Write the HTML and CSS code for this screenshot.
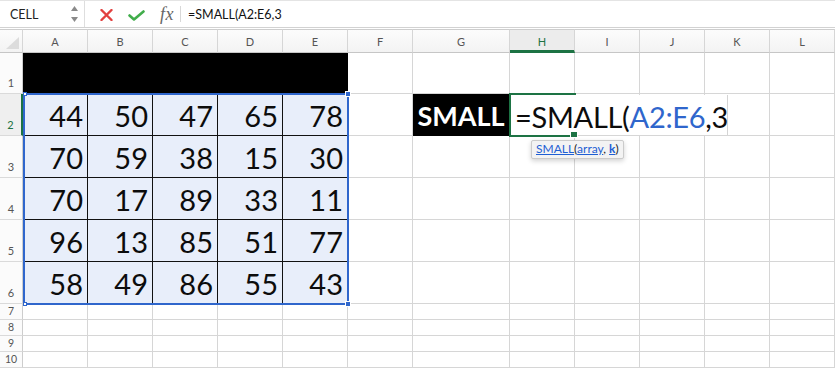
FILE: index.html
```html
<!DOCTYPE html>
<html>
  <head>
    <meta charset="utf-8" />
    <title>SMALL function</title>
    <link rel="stylesheet" href="styles.css">
  </head>
  <body>
    <div class="formula-bar">
      <div class="name-box">
        <span class="name-text">CELL</span>
        <svg class="spinner" width="9" height="18" viewBox="0 0 9 18">
          <path d="M4.5 1 L8 6 L1 6 Z" fill="#8a8a8a" />
          <path d="M4.5 17 L8 12 L1 12 Z" fill="#8a8a8a" />
        </svg>
      </div>
      <svg class="icon-cancel" width="13" height="12" viewBox="0 0 13 12">
        <path d="M1.5 1 L11.5 11 M11.5 1 L1.5 11" stroke="#e2403f" stroke-width="2.4" stroke-linecap="round" />
      </svg>
      <svg class="icon-ok" width="17" height="11" viewBox="0 0 17 11">
        <path d="M1.5 5.5 L6 9.5 L15.5 1.5" stroke="#41ad4b" stroke-width="2.6" fill="none" stroke-linecap="round" stroke-linejoin="round" />
      </svg>
      <span class="fx">fx</span>
      <span class="fb-sep"></span>
      <span class="fb-text">=SMALL(A2:E6,3</span>
    </div>

    <div class="sheet-wrap">
      <div class="sheet">
        <!-- header row -->
        <div class="corner"><span class="corner-tri"></span></div>
        <div class="col-head">A</div>
        <div class="col-head">B</div>
        <div class="col-head">C</div>
        <div class="col-head">D</div>
        <div class="col-head">E</div>
        <div class="col-head">F</div>
        <div class="col-head">G</div>
        <div class="col-head active">H</div>
        <div class="col-head">I</div>
        <div class="col-head">J</div>
        <div class="col-head">K</div>
        <div class="col-head">L</div>

        <!-- row 1 -->
        <div class="row-head">1</div>
        <div class="cell black"></div>
        <div class="cell black"></div>
        <div class="cell black"></div>
        <div class="cell black"></div>
        <div class="cell black"></div>
        <div class="cell"></div>
        <div class="cell"></div>
        <div class="cell"></div>
        <div class="cell"></div>
        <div class="cell"></div>
        <div class="cell"></div>
        <div class="cell"></div>

        <!-- row 2 -->
        <div class="row-head active">2</div>
        <div class="cell num">44</div>
        <div class="cell num">50</div>
        <div class="cell num">47</div>
        <div class="cell num">65</div>
        <div class="cell num">78</div>
        <div class="cell"></div>
        <div class="cell label">SMALL</div>
        <div class="cell"></div>
        <div class="cell"></div>
        <div class="cell"></div>
        <div class="cell"></div>
        <div class="cell"></div>

        <!-- row 3 -->
        <div class="row-head">3</div>
        <div class="cell num">70</div>
        <div class="cell num">59</div>
        <div class="cell num">38</div>
        <div class="cell num">15</div>
        <div class="cell num">30</div>
        <div class="cell"></div>
        <div class="cell"></div>
        <div class="cell"></div>
        <div class="cell"></div>
        <div class="cell"></div>
        <div class="cell"></div>
        <div class="cell"></div>

        <!-- row 4 -->
        <div class="row-head">4</div>
        <div class="cell num">70</div>
        <div class="cell num">17</div>
        <div class="cell num">89</div>
        <div class="cell num">33</div>
        <div class="cell num">11</div>
        <div class="cell"></div>
        <div class="cell"></div>
        <div class="cell"></div>
        <div class="cell"></div>
        <div class="cell"></div>
        <div class="cell"></div>
        <div class="cell"></div>

        <!-- row 5 -->
        <div class="row-head">5</div>
        <div class="cell num">96</div>
        <div class="cell num">13</div>
        <div class="cell num">85</div>
        <div class="cell num">51</div>
        <div class="cell num">77</div>
        <div class="cell"></div>
        <div class="cell"></div>
        <div class="cell"></div>
        <div class="cell"></div>
        <div class="cell"></div>
        <div class="cell"></div>
        <div class="cell"></div>

        <!-- row 6 -->
        <div class="row-head">6</div>
        <div class="cell num">58</div>
        <div class="cell num">49</div>
        <div class="cell num">86</div>
        <div class="cell num">55</div>
        <div class="cell num">43</div>
        <div class="cell"></div>
        <div class="cell"></div>
        <div class="cell"></div>
        <div class="cell"></div>
        <div class="cell"></div>
        <div class="cell"></div>
        <div class="cell"></div>

        <!-- rows 7-10 -->
        <div class="row-head short">7</div>
        <div class="cell"></div><div class="cell"></div><div class="cell"></div><div class="cell"></div>
        <div class="cell"></div><div class="cell"></div><div class="cell"></div><div class="cell"></div>
        <div class="cell"></div><div class="cell"></div><div class="cell"></div><div class="cell"></div>

        <div class="row-head short">8</div>
        <div class="cell"></div><div class="cell"></div><div class="cell"></div><div class="cell"></div>
        <div class="cell"></div><div class="cell"></div><div class="cell"></div><div class="cell"></div>
        <div class="cell"></div><div class="cell"></div><div class="cell"></div><div class="cell"></div>

        <div class="row-head short">9</div>
        <div class="cell"></div><div class="cell"></div><div class="cell"></div><div class="cell"></div>
        <div class="cell"></div><div class="cell"></div><div class="cell"></div><div class="cell"></div>
        <div class="cell"></div><div class="cell"></div><div class="cell"></div><div class="cell"></div>

        <div class="row-head short">10</div>
        <div class="cell"></div><div class="cell"></div><div class="cell"></div><div class="cell"></div>
        <div class="cell"></div><div class="cell"></div><div class="cell"></div><div class="cell"></div>
        <div class="cell"></div><div class="cell"></div><div class="cell"></div><div class="cell"></div>
      </div>

      <!-- selection, edit box and tooltip lie over the cells -->
      <div class="sheet overlay">
        <div class="range">
          <span class="handle small tl"></span>
          <span class="handle big tr"></span>
          <span class="handle small bl"></span>
          <span class="handle big br"></span>
        </div>
        <div class="edit">=SMALL(<span class="ref">A2:E6</span>,3</div>
        <div class="active-cell"><span class="fill-handle"></span></div>
        <div class="tip">
          <span class="link">SMALL</span>(<span class="link">array</span>, <span class="link bold">k</span>)
        </div>
      </div>
    </div>
  </body>
</html>
```

FILE: styles.css
```css
body {
  margin: 0;
  padding: 0;
  width: 835px;
  height: 369px;
  overflow: hidden;
  background: #fff;
  font-family: Lato, "Open Sans", sans-serif;
}

/* formula bar */
.formula-bar {
  display: flex;
  align-items: center;
  height: 28px;
  box-sizing: border-box;
  border-top: 1px solid #e4e4e4;
  border-bottom: 1px solid #d2d2d2;
  margin-bottom: 1px;
}
.name-box {
  width: 85px;
  height: 100%;
  box-sizing: border-box;
  border-right: 1px solid #dedede;
  display: flex;
  align-items: center;
  padding-left: 10px;
  padding-right: 5px;
}
.name-text {
  flex: 1;
  font-size: 12.5px;
  color: #222;
}
.spinner {
  display: block;
}
.icon-cancel {
  margin-left: 15px;
  margin-top: 2px;
}
.icon-ok {
  margin-left: 15px;
  margin-top: 2px;
}
.fx {
  margin-left: 15px;
  font-family: "Liberation Serif", serif;
  font-style: italic;
  font-size: 18px;
  color: #666;
  letter-spacing: 0.5px;
}
.fb-sep {
  width: 1px;
  height: 16px;
  background: #d8d8d8;
  margin-left: 6px;
}
.fb-text {
  margin-left: 7px;
  font-size: 12.5px;
  color: #111;
}

/* sheet grid */
.sheet-wrap {
  position: relative;
}
.sheet {
  display: grid;
  grid-template-columns: 23px repeat(6, 65px) 97px repeat(5, 65px);
  grid-template-rows: 24px 41px repeat(5, 42px) repeat(4, 16px);
}
.overlay {
  position: absolute;
  top: 0;
  left: 0;
  pointer-events: none;
}
.corner,
.col-head {
  box-sizing: border-box;
  border-top: 1px solid #cdcdcd;
  border-bottom: 1px solid #c6c6c6;
  border-right: 1px solid #d6d6d6;
  background: linear-gradient(#fcfcfc, #f3f3f3);
}
.corner {
  position: relative;
}
.corner-tri {
  position: absolute;
  right: 3px;
  bottom: 3px;
  width: 0;
  height: 0;
  border-left: 13px solid transparent;
  border-bottom: 12px solid #dcdcdc;
}
.col-head {
  display: flex;
  align-items: center;
  justify-content: center;
  font-size: 11px;
  color: #555;
}
.col-head.active {
  background: #ececec;
  color: #1d7344;
  border-bottom: 3px solid #1d7344;
  padding-top: 2px;
}
.row-head {
  box-sizing: border-box;
  border-right: 1px solid #cdcdcd;
  border-bottom: 1px solid #dadada;
  background: #fbfbfb;
  display: flex;
  align-items: flex-end;
  justify-content: center;
  padding-bottom: 5px;
  font-size: 11px;
  line-height: 11px;
  color: #555;
}
.row-head.active {
  background: #efefef;
  color: #1d7344;
  border-right: 2px solid #1d7344;
}
.row-head.short {
  align-items: center;
  padding-bottom: 0;
  font-size: 10.5px;
}
.cell {
  box-sizing: border-box;
  border-right: 1px solid #d6d6d6;
  border-bottom: 1px solid #d6d6d6;
}
.cell.black {
  background: #000;
  border-color: #000;
}
.cell.num {
  background: #e8eefa;
  border-right: 1px solid #111;
  border-bottom: 1px solid #111;
  display: flex;
  justify-content: flex-end;
  align-items: flex-end;
  padding-right: 4px;
  padding-bottom: 5px;
  font-size: 29px;
  line-height: 29px;
  color: #0c0c0c;
}
.cell.label {
  background: #000;
  border-color: #000;
  display: flex;
  justify-content: center;
  align-items: flex-end;
  padding-bottom: 6px;
  font-size: 27px;
  line-height: 27px;
  font-weight: 700;
  color: #fff;
}

/* overlays */
.range {
  grid-column: 2 / 7;
  grid-row: 3 / 8;
  margin: -1px -1px -1px 0;
  border: 2px solid #2f66cc;
  position: relative;
}
.handle {
  position: absolute;
  box-sizing: border-box;
}
.handle.small {
  width: 4px;
  height: 4px;
  background: #fff;
  border: 1px solid #2f66cc;
}
.handle.big {
  width: 6px;
  height: 6px;
  background: #2f66cc;
  border: 1px solid #fff;
}
.handle.tl { left: -2px; top: -3px; }
.handle.bl { left: -2px; bottom: -3px; }
.handle.tr { right: -4px; top: -4px; }
.handle.br { right: -4px; bottom: -4px; }

.edit {
  grid-column: 9 / 13;
  grid-row: 3 / 4;
  justify-self: start;
  width: 218px;
  box-sizing: border-box;
  margin: 1px 0 1px 0;
  background: #fff;
  border-right: 1px solid #d4d4d4;
  display: flex;
  align-items: flex-end;
  padding-left: 5px;
  padding-bottom: 4px;
  font-size: 29px;
  line-height: 29px;
  letter-spacing: -0.3px;
  color: #0c0c0c;
  white-space: nowrap;
}
.edit .ref {
  color: #2f66cc;
}
.active-cell {
  grid-column: 9 / 10;
  grid-row: 3 / 4;
  margin: -1px -1px -1px -1px;
  border-top: 2px solid #1d7344;
  border-left: 2px solid #1d7344;
  border-bottom: 2px solid #1d7344;
  position: relative;
}
.fill-handle {
  position: absolute;
  right: -2px;
  bottom: -3px;
  width: 6px;
  height: 5px;
  background: #1d7344;
  border: 1px solid #fff;
}
.tip {
  grid-column: 9 / 12;
  grid-row: 4 / 5;
  justify-self: start;
  align-self: start;
  margin-left: 21px;
  margin-top: 4px;
  padding: 1px 4px 2px 4px;
  background: #f3f3f3;
  border: 1px solid #cbcbcb;
  border-radius: 2px;
  box-shadow: 0 2px 5px rgba(0, 0, 0, 0.18);
  font-size: 12px;
  line-height: 14px;
  color: #222;
  white-space: nowrap;
}
.tip .link {
  color: #1f5fd4;
  text-decoration: underline;
}
.tip .bold {
  font-weight: 700;
}
```
